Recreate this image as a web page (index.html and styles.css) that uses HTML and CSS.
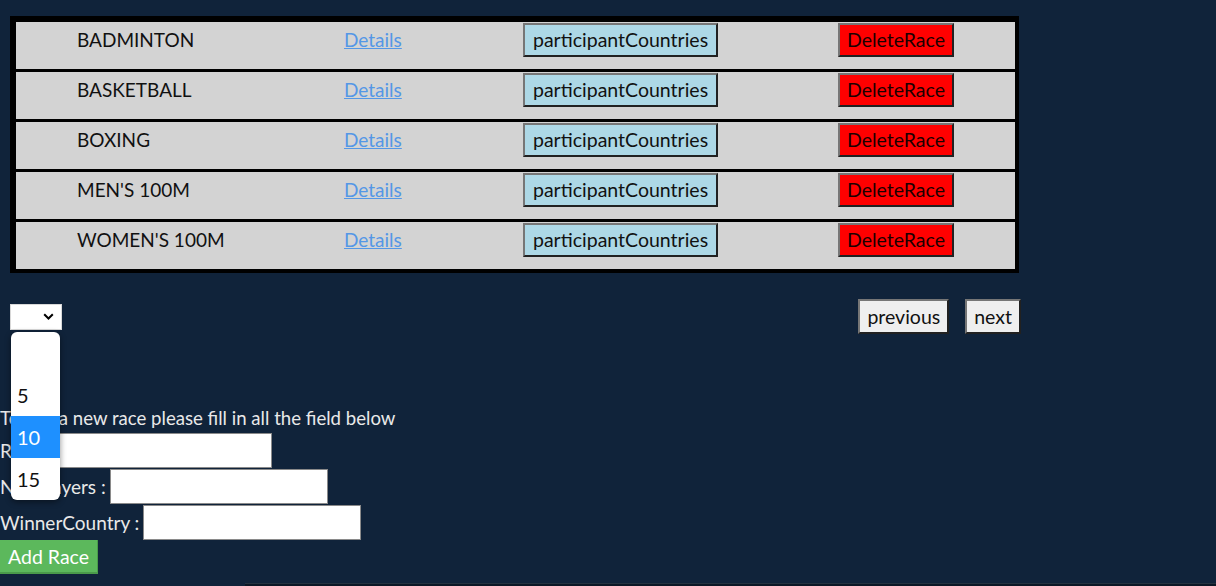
FILE: index.html
```html
<!DOCTYPE html>
<html lang="en">
<head>
<meta charset="utf-8">
<title>Races</title>
<link rel="stylesheet" href="styles.css">
</head>
<body>
<div class="page">
  <section class="races">
    <table class="race-table">
      <colgroup>
        <col class="c-name"><col class="c-details"><col class="c-countries"><col class="c-delete">
      </colgroup>
      <tbody>
        <tr>
          <td class="name"><div class="cell">BADMINTON</div></td>
          <td><div class="cell"><a href="#" class="details">Details</a></div></td>
          <td><div class="cell"><button class="btn btn-countries">participantCountries</button></div></td>
          <td><div class="cell"><button class="btn btn-delete">DeleteRace</button></div></td>
        </tr>
        <tr>
          <td class="name"><div class="cell">BASKETBALL</div></td>
          <td><div class="cell"><a href="#" class="details">Details</a></div></td>
          <td><div class="cell"><button class="btn btn-countries">participantCountries</button></div></td>
          <td><div class="cell"><button class="btn btn-delete">DeleteRace</button></div></td>
        </tr>
        <tr>
          <td class="name"><div class="cell">BOXING</div></td>
          <td><div class="cell"><a href="#" class="details">Details</a></div></td>
          <td><div class="cell"><button class="btn btn-countries">participantCountries</button></div></td>
          <td><div class="cell"><button class="btn btn-delete">DeleteRace</button></div></td>
        </tr>
        <tr>
          <td class="name"><div class="cell">MEN'S 100M</div></td>
          <td><div class="cell"><a href="#" class="details">Details</a></div></td>
          <td><div class="cell"><button class="btn btn-countries">participantCountries</button></div></td>
          <td><div class="cell"><button class="btn btn-delete">DeleteRace</button></div></td>
        </tr>
        <tr>
          <td class="name"><div class="cell">WOMEN'S 100M</div></td>
          <td><div class="cell"><a href="#" class="details">Details</a></div></td>
          <td><div class="cell"><button class="btn btn-countries">participantCountries</button></div></td>
          <td><div class="cell"><button class="btn btn-delete">DeleteRace</button></div></td>
        </tr>
      </tbody>
    </table>

    <div class="pager">
      <div class="page-size">
        <div class="select">
          <svg class="chevron" width="11" height="7" viewBox="0 0 11 7"><path d="M1.2 1.2 L5.5 5.5 L9.8 1.2" fill="none" stroke="#000" stroke-width="2"/></svg>
        </div>
        <ul class="select-popup">
          <li class="opt"></li>
          <li class="opt">5</li>
          <li class="opt active">10</li>
          <li class="opt">15</li>
        </ul>
      </div>
      <div class="pager-buttons">
        <button class="btn btn-page">previous</button>
        <button class="btn btn-page">next</button>
      </div>
    </div>
  </section>

  <form class="add-form">
    <div class="intro">To add a new race please fill in all the field below</div>
    <div class="field"><label>Race :</label><input type="text"></div>
    <div class="field"><label>Nbr Players :</label><input type="text"></div>
    <div class="field"><label>WinnerCountry :</label><input type="text"></div>
    <button type="button" class="btn-add">Add Race</button>
  </form>

  <div class="footer-edge"></div>
</div>
</body>
</html>
```

FILE: styles.css
```css
* { box-sizing: border-box; }

html, body {
  margin: 0;
  padding: 0;
  height: 100%;
  overflow: hidden;
}

body {
  background: #10233a;
  font-family: Lato, "Open Sans", sans-serif;
  font-size: 19px;
  color: #e9e9e9;
}

.races {
  padding: 16px 0 0 10px;
  width: 1021px;
}

.race-table {
  width: 1009px;
  border-collapse: separate;
  border-spacing: 0;
  border-style: solid;
  border-color: #000;
  border-width: 6px 4px 4px 6px;
  table-layout: fixed;
  background: #000;
}

.c-name { width: 328px; }
.c-details { width: 179px; }
.c-countries { width: 315px; }
.c-delete { width: 177px; }

.race-table td {
  background: #d3d3d3;
  padding: 1px 0 12px 0;
  vertical-align: top;
  border-bottom: 3px solid #000;
  color: #111;
}

.race-table tr:last-child td { border-bottom: 0; }

.race-table td.name { padding-left: 61px; }

.cell {
  height: 34px;
  display: flex;
  align-items: center;
  white-space: nowrap;
  padding-bottom: 1px;
}

.details {
  color: #5497e6;
  text-decoration: underline;
}

.btn {
  font-family: Lato, "Open Sans", sans-serif;
  font-size: 19.5px;
  height: 34px;
  padding: 0 8px;
  border: 2px outset #767676;
  color: #111;
  margin: 0;
  cursor: pointer;
}

.btn-countries { background: #add8e6; }
.btn-delete { background: #ff0000; color: #1a0000; padding: 0 7px; }

.pager {
  margin-top: 26px;
  height: 35px;
  display: flex;
  justify-content: space-between;
  align-items: center;
}

.page-size { position: relative; }

.select {
  width: 52px;
  height: 26px;
  background: #fff;
  border: 1px solid #d8d8d8;
  display: flex;
  align-items: center;
  justify-content: flex-end;
  padding-right: 7px;
}

.select-popup {
  position: absolute;
  left: 1px;
  top: 28px;
  width: 49px;
  margin: 0;
  padding: 0;
  list-style: none;
  background: #fff;
  border-radius: 6px;
  overflow: hidden;
  box-shadow: 0 2px 6px rgba(0, 0, 0, 0.45);
  z-index: 10;
}

.opt {
  height: 42px;
  line-height: 42px;
  padding-left: 6px;
  color: #111;
  font-size: 20px;
}

.opt.active {
  background: #1e90ff;
  color: #fff;
}

.pager-buttons {
  display: flex;
  gap: 16px;
}

.btn-page {
  height: 35px;
  background: #efefef;
  padding: 0 7px;
}

.add-form {
  margin-top: 72px;
}

.intro {
  height: 26px;
  line-height: 24px;
  font-size: 18.6px;
}

.field {
  height: 36px;
  display: flex;
  align-items: center;
}

.field label { white-space: pre; }

.field input {
  margin-left: 4px;
  width: 218px;
  height: 35px;
  border: 1px solid #8a8a8a;
  background: #fff;
  padding: 0 4px;
  font-size: 18px;
}

.btn-add {
  display: block;
  height: 34px;
  padding: 0 8px;
  background: #5cb85c;
  color: #fff;
  border: 0;
  border-bottom: 2px solid #4a9a4a;
  border-right: 1px solid #4a9a4a;
  font-family: Lato, "Open Sans", sans-serif;
  font-size: 19.5px;
  margin: 0;
}

.footer-edge {
  margin: 9px 0 0 245px;
  height: 4px;
  background: #0b1725;
  border-top: 1px solid #24323f;
}
```
